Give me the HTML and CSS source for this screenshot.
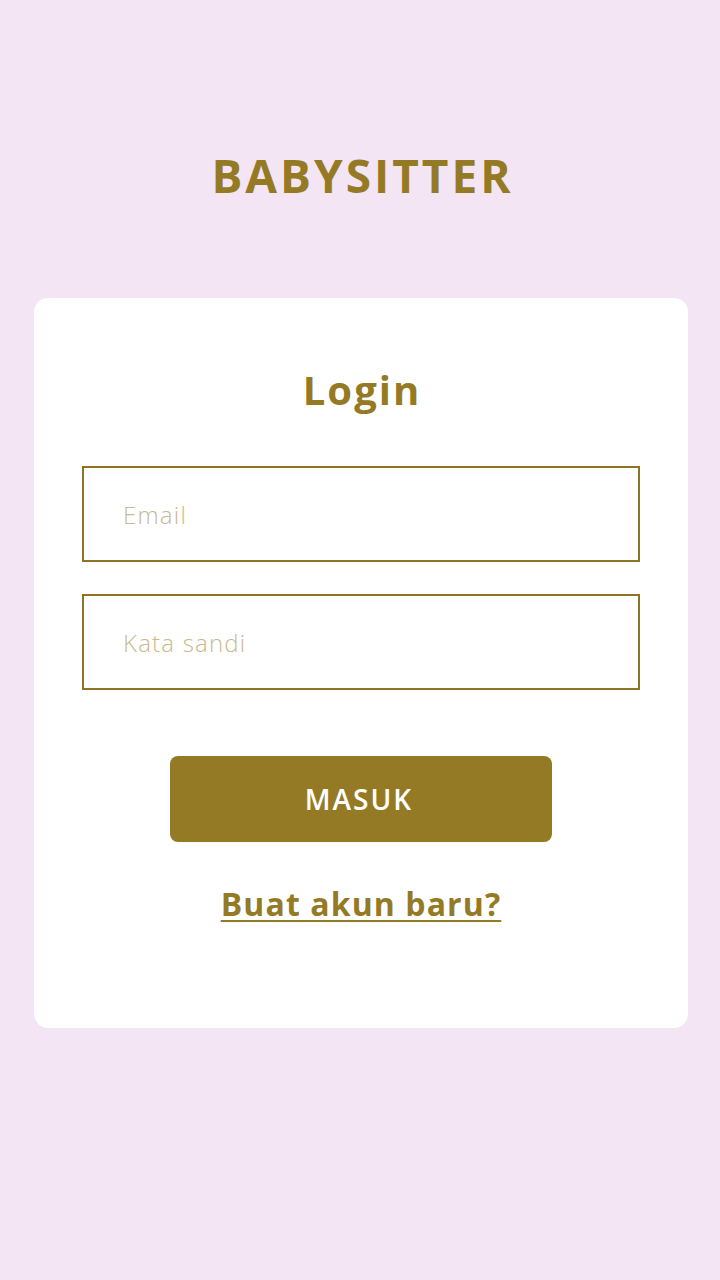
FILE: index.html
```html
<!DOCTYPE html>
<html lang="id">
<head>
<meta charset="utf-8">
<title>Babysitter - Login</title>
<link rel="stylesheet" href="styles.css">
</head>
<body>
<main class="page">
  <h1 class="brand">BABYSITTER</h1>
  <section class="card">
    <h2 class="card-title">Login</h2>
    <form class="form">
      <input class="field" type="email" placeholder="Email">
      <input class="field" type="password" placeholder="Kata sandi">
      <button class="btn" type="button">MASUK</button>
    </form>
    <a class="link" href="#">Buat akun baru?</a>
  </section>
</main>
</body>
</html>
```
FILE: styles.css
```css
html, body {
  margin: 0;
  padding: 0;
}
body {
  background: #f3e5f4;
  font-family: "Open Sans", "Liberation Sans", sans-serif;
  color: #957a26;
  min-height: 1280px;
}
.page {
  display: flex;
  flex-direction: column;
  align-items: center;
  padding: 147px 32px 0 34px;
}
.brand {
  margin: 0;
  font-size: 46px;
  line-height: 56px;
  font-weight: 700;
  color: #957a26;
  letter-spacing: 3px;
  padding-left: 3px;
}
.card {
  box-sizing: border-box;
  margin-top: 95px;
  width: 654px;
  height: 730px;
  background: #ffffff;
  border-radius: 14px;
  padding: 66px 48px 0;
  display: flex;
  flex-direction: column;
  align-items: center;
}
.card-title {
  margin: 0;
  font-size: 40px;
  line-height: 52px;
  font-weight: 700;
  color: #957a26;
  letter-spacing: 2px;
  padding-left: 2px;
}
.form {
  margin-top: 50px;
  width: 100%;
  display: flex;
  flex-direction: column;
  align-items: center;
  gap: 32px;
}
.field {
  box-sizing: border-box;
  width: 558px;
  height: 96px;
  border: 2px solid #8f7324;
  border-radius: 0;
  padding: 0 39px;
  font-family: inherit;
  font-size: 24px;
  font-weight: 300;
  letter-spacing: 1.2px;
  color: #957a26;
  outline: none;
  background: #fff;
}
.field::placeholder {
  color: #c9b98d;
}
.btn {
  margin-top: 34px;
  width: 382px;
  height: 86px;
  border: none;
  border-radius: 8px;
  background: #957a26;
  color: #ffffff;
  font-family: inherit;
  font-size: 28px;
  font-weight: 600;
  letter-spacing: 2px;
  padding-left: 2px;
  cursor: pointer;
}
.link {
  margin-top: 42px;
  font-size: 32px;
  line-height: 40px;
  font-weight: 700;
  color: #957a26;
  letter-spacing: 1.1px;
  text-decoration: underline;
  text-decoration-thickness: 2px;
  text-underline-offset: 4px;
}
```
